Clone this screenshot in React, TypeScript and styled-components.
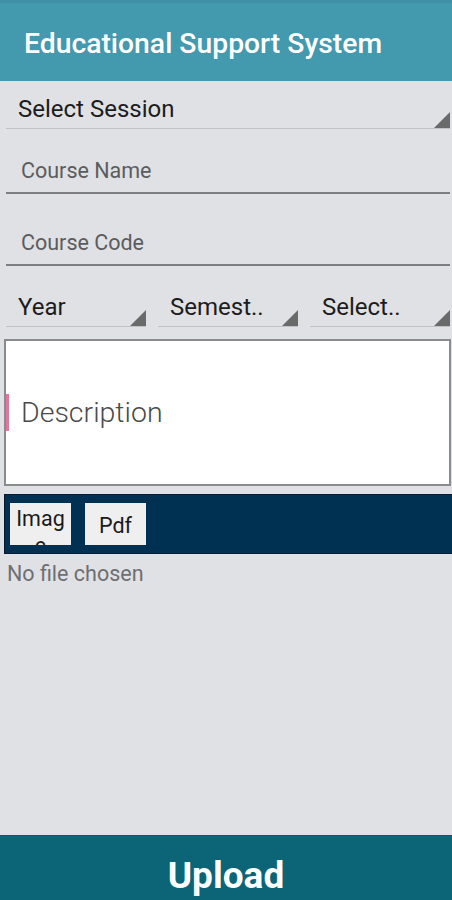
import React from "react";
import styled, { createGlobalStyle } from "styled-components";

const Global = createGlobalStyle`
  html, body { margin: 0; padding: 0; }
  body { background: #e0e1e5; font-family: Roboto, "Liberation Sans", sans-serif; }
  #root { min-height: 900px; }
`;

const Page = styled.div`
  width: 452px;
  height: 900px;
  display: flex;
  flex-direction: column;
  background: #e0e1e5;
  overflow: hidden;
`;

const Header = styled.header`
  height: 81px;
  background: #4399ae;
  display: flex;
  align-items: center;
  padding: 0 0 0 24px;
  box-sizing: border-box;
  border-top: 3px solid #3f90a6;
`;

const Title = styled.h1`
  margin: 0;
  font-size: 28.3px;
  font-weight: 500;
  color: #ffffff;
  margin-top: 2px;
`;

const Form = styled.div`
  flex: 1;
  display: flex;
  flex-direction: column;
`;

const SelectBox = styled.div<{ $w?: string }>`
  position: relative;
  width: ${(p) => p.$w ?? "444px"};
  height: 48px;
  box-sizing: border-box;
  border-bottom: 1.5px solid #c2c3c7;
  display: flex;
  align-items: center;
  padding: 8px 0 0 12px;
  font-size: 24px;
  color: #1c1c1c;
  &::after {
    content: "";
    position: absolute;
    right: 0;
    bottom: 0;
    width: 0;
    height: 0;
    border-left: 16px solid transparent;
    border-bottom: 16px solid #6a6a6a;
  }
`;

const SessionWrap = styled.div`
  padding: 0 2px 0 6px;
`;

const Field = styled.div<{ $h: number }>`
  margin: 0 2px 0 6px;
  height: ${(p) => p.$h}px;
  box-sizing: border-box;
  border-bottom: 2px solid #7d7e82;
  display: flex;
  align-items: flex-end;
  padding: 0 0 9px 15px;
  font-size: 21.5px;
  color: #5b5c5e;
`;

const SelectRow = styled.div`
  display: flex;
  gap: 12px;
  padding: 13px 2px 0 6px;
`;

const DescBox = styled.div`
  margin: 12px 1px 0 4px;
  height: 147px;
  background: #ffffff;
  border: 2px solid #8a8b8e;
  box-sizing: border-box;
  display: flex;
  align-items: center;
`;

const DescText = styled.span`
  font-size: 28.5px;
  color: #4a4a4a;
  padding-left: 12px;
  border-left: 3px solid #e8739c;
  line-height: 37px;
  font-weight: 300;
  margin-top: 0;
`;

const FileBar = styled.div`
  margin: 8px 0 0 4px;
  height: 60px;
  background: #003152;
  border: 1.5px solid #0a1a33;
  border-right: none;
  box-sizing: border-box;
  display: flex;
  align-items: center;
  gap: 14px;
  padding-left: 5px;
`;

const FileButton = styled.button<{ $top?: boolean }>`
  width: 61px;
  height: 42px;
  background: #efefef;
  border: none;
  border-radius: 0;
  padding: 2px 3px 0;
  font-family: Roboto, "Liberation Sans", sans-serif;
  font-size: 21.5px;
  line-height: 27px;
  color: #1a1a1a;
  overflow: hidden;
  word-break: break-all;
  display: flex;
  justify-content: center;
  align-items: ${(p) => (p.$top ? "flex-start" : "center")};
  text-align: center;
`;

const NoFile = styled.div`
  padding: 7px 0 0 7px;
  font-size: 21.5px;
  color: #6e6f71;
`;

const Spacer = styled.div`
  flex: 1;
`;

const UploadBar = styled.button`
  height: 65px;
  border: none;
  background: #0b6577;
  border-top: 1px solid #0c5a6b;
  color: #ffffff;
  font-family: Roboto, "Liberation Sans", sans-serif;
  font-size: 37px;
  font-weight: 700;
  display: flex;
  justify-content: center;
  align-items: center;
  padding: 14px 0 0;
`;

export default function App() {
  return (
    <>
      <Global />
      <Page>
        <Header>
          <Title>Educational Support System</Title>
        </Header>
        <Form>
          <SessionWrap>
            <SelectBox>Select Session</SelectBox>
          </SessionWrap>
          <Field $h={65}>Course Name</Field>
          <Field $h={72}>Course Code</Field>
          <SelectRow>
            <SelectBox $w="140px">Year</SelectBox>
            <SelectBox $w="140px">Semest..</SelectBox>
            <SelectBox $w="140px">Select..</SelectBox>
          </SelectRow>
          <DescBox>
            <DescText>Description</DescText>
          </DescBox>
          <FileBar>
            <FileButton $top>Image</FileButton>
            <FileButton>Pdf</FileButton>
          </FileBar>
          <NoFile>No file chosen</NoFile>
          <Spacer />
        </Form>
        <UploadBar>Upload</UploadBar>
      </Page>
    </>
  );
}
